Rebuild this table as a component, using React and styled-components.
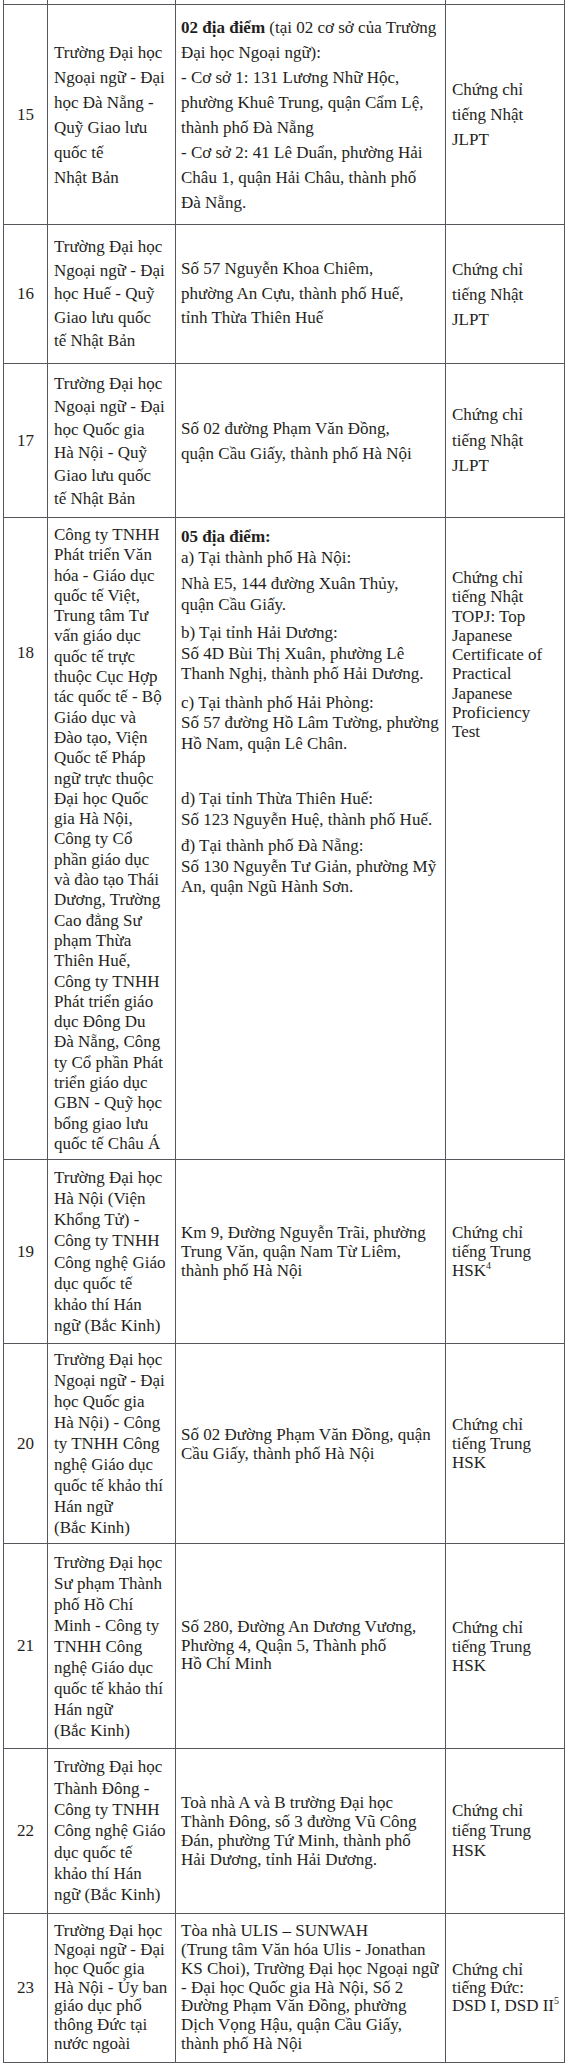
import React from "react";
import styled, { createGlobalStyle } from "styled-components";

const GlobalStyle = createGlobalStyle`
  html, body {
    margin: 0;
    padding: 0;
    background: #ffffff;
  }
  body {
    font-family: "Liberation Serif", "Times New Roman", serif;
    color: #1f1f22;
  }
`;

const Page = styled.div`
  width: 570px;
  height: 2066px;
  box-sizing: border-box;
  padding-left: 3px;
  background: #ffffff;
`;

const Table = styled.div`
  width: 562px;
  box-sizing: border-box;
  border-left: 1px solid #55555c;
`;

const Row = styled.div`
  display: grid;
  grid-template-columns: 44px 128px 270px 119px;
  height: ${(p) => p.$h}px;
  box-sizing: border-box;
  border-bottom: 1px solid #55555c;
`;

const Cell = styled.div`
  display: flex;
  flex-direction: column;
  justify-content: ${(p) => (p.$top ? "flex-start" : "center")};
  padding: ${(p) => p.$pt || 0}px ${(p) => (p.$px === undefined ? 6 : p.$px)}px 0;
  border-right: 1px solid #55555c;
  font-size: 17px;
  line-height: ${(p) => p.$lh || 20}px;
  min-width: 0;
`;

const NumCell = styled(Cell)`
  text-align: center;
`;

const Line = styled.div`
  white-space: nowrap;
`;

const Group = styled.div`
  margin-top: ${(p) => p.$gap || 0}px;
`;

const Bold = styled.b`
  font-weight: 700;
`;

const Sup = styled.sup`
  font-size: 10px;
  line-height: 0;
  vertical-align: 7px;
`;

const rows = [
  {
    n: "15",
    h: 220,
    lh: [25, 25, 25],
    org: ["Trường Đại học", "Ngoại ngữ - Đại", "học Đà Nẵng -", "Quỹ Giao lưu", "quốc tế", "Nhật Bản"],
    addr: [
      {
        lines: [
          <>
            <Bold>02 địa điểm</Bold> (tại 02 cơ sở của Trường
          </>,
          "Đại học Ngoại ngữ):",
          "- Cơ sở 1: 131 Lương Nhữ Hộc,",
          "phường Khuê Trung, quận Cẩm Lệ,",
          "thành phố Đà Nẵng",
          "- Cơ sở 2: 41 Lê Duẩn, phường Hải",
          "Châu 1, quận Hải Châu, thành phố",
          "Đà Nẵng.",
        ],
      },
    ],
    cert: ["Chứng chỉ", "tiếng Nhật", "JLPT"],
  },
  {
    n: "16",
    h: 139,
    lh: [23.5, 24.5, 25],
    org: ["Trường Đại học", "Ngoại ngữ - Đại", "học Huế - Quỹ", "Giao lưu quốc", "tế Nhật Bản"],
    addr: [
      {
        lines: ["Số 57 Nguyễn Khoa Chiêm,", "phường An Cựu, thành phố Huế,", "tỉnh Thừa Thiên Huế"],
      },
    ],
    cert: ["Chứng chỉ", "tiếng Nhật", "JLPT"],
  },
  {
    n: "17",
    h: 154,
    lh: [23, 25, 25.5],
    org: ["Trường Đại học", "Ngoại ngữ - Đại", "học Quốc gia", "Hà Nội - Quỹ", "Giao lưu quốc", "tế Nhật Bản"],
    addr: [{ lines: ["Số 02 đường Phạm Văn Đồng,", "quận Cầu Giấy, thành phố Hà Nội"] }],
    cert: ["Chứng chỉ", "tiếng Nhật", "JLPT"],
  },
  {
    n: "18",
    h: 642,
    lh: [20.3, 20.5, 19.3],
    top: { n: 125, org: 7, addr: 9, cert: 50 },
    org: [
      "Công ty TNHH",
      "Phát triển Văn",
      "hóa - Giáo dục",
      "quốc tế Việt,",
      "Trung tâm Tư",
      "vấn giáo dục",
      "quốc tế trực",
      "thuộc Cục Hợp",
      "tác quốc tế - Bộ",
      "Giáo dục và",
      "Đào tạo, Viện",
      "Quốc tế Pháp",
      "ngữ trực thuộc",
      "Đại học Quốc",
      "gia Hà Nội,",
      "Công ty Cổ",
      "phần giáo dục",
      "và đào tạo Thái",
      "Dương, Trường",
      "Cao đẳng Sư",
      "phạm Thừa",
      "Thiên Huế,",
      "Công ty TNHH",
      "Phát triển giáo",
      "dục Đông Du",
      "Đà Nẵng, Công",
      "ty Cổ phần Phát",
      "triển giáo dục",
      "GBN - Quỹ học",
      "bổng giao lưu",
      "quốc tế Châu Á",
    ],
    addr: [
      { lines: [<Bold>05 địa điểm:</Bold>, "a) Tại thành phố Hà Nội:"] },
      { gap: 6, lines: ["Nhà E5, 144 đường Xuân Thủy,", "quận Cầu Giấy."] },
      { gap: 8, lines: ["b) Tại tỉnh Hải Dương:", "Số 4D Bùi Thị Xuân, phường Lê", "Thanh Nghị, thành phố Hải Dương."] },
      { gap: 8, lines: ["c) Tại thành phố Hải Phòng:", "Số 57 đường Hồ Lâm Tường, phường", "Hồ Nam, quận Lê Chân."] },
      { gap: 35, lines: ["d) Tại tỉnh Thừa Thiên Huế:", "Số 123 Nguyễn Huệ, thành phố Huế."] },
      { gap: 6, lines: ["đ) Tại thành phố Đà Nẵng:", "Số 130 Nguyễn Tư Giản, phường Mỹ", "An, quận Ngũ Hành Sơn."] },
    ],
    cert: [
      "Chứng chỉ",
      "tiếng Nhật",
      "TOPJ: Top",
      "Japanese",
      "Certificate of",
      "Practical",
      "Japanese",
      "Proficiency",
      "Test",
    ],
  },
  {
    n: "19",
    h: 184,
    lh: [21.2, 19.2, 19.2],
    org: [
      "Trường Đại học",
      "Hà Nội (Viện",
      "Khổng Tử) -",
      "Công ty TNHH",
      "Công nghệ Giáo",
      "dục quốc tế",
      "khảo thí Hán",
      "ngữ (Bắc Kinh)",
    ],
    addr: [{ lines: ["Km 9, Đường Nguyễn Trãi, phường", "Trung Văn, quận Nam Từ Liêm,", "thành phố Hà Nội"] }],
    cert: [
      "Chứng chỉ",
      "tiếng Trung",
      <>
        HSK<Sup>4</Sup>
      </>,
    ],
  },
  {
    n: "20",
    h: 200,
    lh: [21, 19, 19],
    org: [
      "Trường Đại học",
      "Ngoại ngữ - Đại",
      "học Quốc gia",
      "Hà Nội) - Công",
      "ty TNHH Công",
      "nghệ Giáo dục",
      "quốc tế khảo thí",
      "Hán ngữ",
      "(Bắc Kinh)",
    ],
    addr: [{ lines: ["Số 02 Đường Phạm Văn Đồng, quận", "Cầu Giấy, thành phố Hà Nội"] }],
    cert: ["Chứng chỉ", "tiếng Trung", "HSK"],
  },
  {
    n: "21",
    h: 205,
    lh: [21, 18.8, 19],
    org: [
      "Trường Đại học",
      "Sư phạm Thành",
      "phố Hồ Chí",
      "Minh - Công ty",
      "TNHH Công",
      "nghệ Giáo dục",
      "quốc tế khảo thí",
      "Hán ngữ",
      "(Bắc Kinh)",
    ],
    addr: [{ lines: ["Số 280, Đường An Dương Vương,", "Phường 4, Quận 5, Thành phố", "Hồ Chí Minh"] }],
    cert: ["Chứng chỉ", "tiếng Trung", "HSK"],
  },
  {
    n: "22",
    h: 165,
    lh: [21.3, 19.1, 19.7],
    org: [
      "Trường Đại học",
      "Thành Đông  -",
      "Công ty TNHH",
      "Công nghệ Giáo",
      "dục quốc tế",
      "khảo thí Hán",
      "ngữ (Bắc Kinh)",
    ],
    addr: [
      {
        lines: [
          "Toà nhà A và B trường Đại học",
          "Thành Đông, số 3 đường Vũ Công",
          "Đán, phường Tứ Minh, thành phố",
          "Hải Dương, tỉnh Hải Dương.",
        ],
      },
    ],
    cert: ["Chứng chỉ", "tiếng Trung", "HSK"],
  },
  {
    n: "23",
    h: 149,
    lh: [18.9, 18.9, 18.3],
    org: [
      "Trường Đại học",
      "Ngoại ngữ - Đại",
      "học Quốc gia",
      "Hà Nội - Ủy ban",
      "giáo dục phổ",
      "thông Đức tại",
      "nước ngoài",
    ],
    addr: [
      {
        lines: [
          "Tòa nhà ULIS – SUNWAH",
          "(Trung tâm Văn hóa Ulis - Jonathan",
          "KS Choi), Trường Đại học Ngoại ngữ",
          "- Đại học Quốc gia Hà Nội, Số 2",
          "Đường Phạm Văn Đồng, phường",
          "Dịch Vọng Hậu, quận Cầu Giấy,",
          "thành phố Hà Nội",
        ],
      },
    ],
    cert: [
      "Chứng chỉ",
      "tiếng Đức:",
      <>
        DSD I, DSD II<Sup>5</Sup>
      </>,
    ],
  },
];

const Lines = ({ items }) => items.map((t, i) => <Line key={i}>{t}</Line>);

const TableRow = ({ row }) => {
  const top = row.top || {};
  return (
    <Row $h={row.h}>
      <NumCell $px={0} $lh={20} $top={top.n !== undefined} $pt={top.n}>
        {row.n}
      </NumCell>
      <Cell $lh={row.lh[0]} $top={top.org !== undefined} $pt={top.org}>
        <Lines items={row.org} />
      </Cell>
      <Cell $lh={row.lh[1]} $px={5} $top={top.addr !== undefined} $pt={top.addr}>
        {row.addr.map((g, i) => (
          <Group key={i} $gap={g.gap}>
            <Lines items={g.lines} />
          </Group>
        ))}
      </Cell>
      <Cell $lh={row.lh[2]} $top={top.cert !== undefined} $pt={top.cert}>
        <Lines items={row.cert} />
      </Cell>
    </Row>
  );
};

export default function App() {
  return (
    <>
      <GlobalStyle />
      <Page>
        <Table>
          <Row $h={5}>
            <Cell />
            <Cell />
            <Cell />
            <Cell />
          </Row>
          {rows.map((r) => (
            <TableRow key={r.n} row={r} />
          ))}
        </Table>
      </Page>
    </>
  );
}
